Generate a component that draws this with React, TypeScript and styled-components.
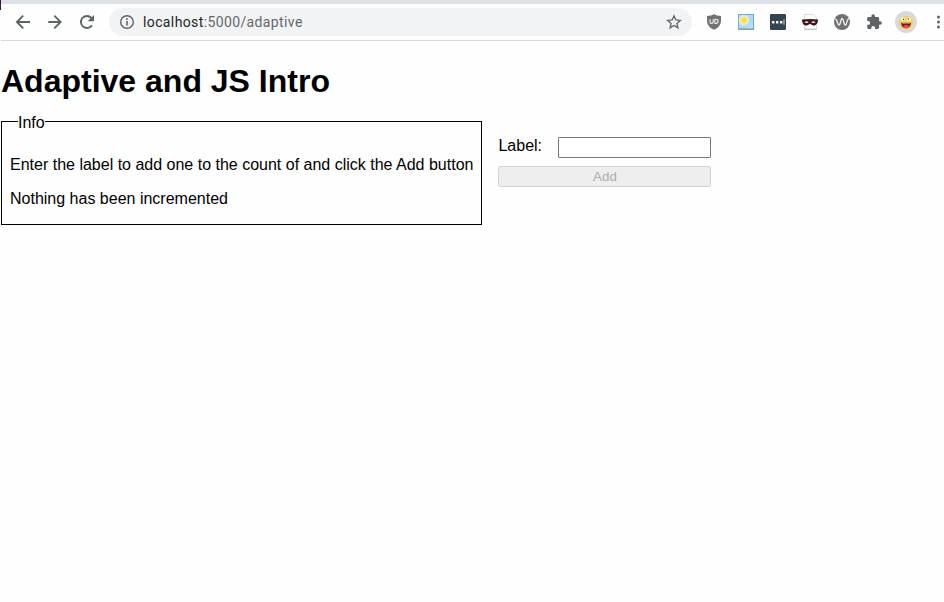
import React from "react";
import styled, { createGlobalStyle } from "styled-components";

const GlobalStyle = createGlobalStyle`
  * { box-sizing: border-box; }
  html, body { margin: 0; padding: 0; background: #fefefe; }
  body { overflow: hidden; font-family: "Liberation Sans", Arial, sans-serif; font-size: 16px; color: #000; }
`;

const Window = styled.div`
  width: 944px;
  height: 602px;
  overflow: hidden;
`;

const TabStrip = styled.div`
  height: 4px;
  background: #dee1e6;
  border-left: 1px solid #341a3a;
`;

const WindowEdge = styled.span`
  flex: none;
  width: 1px;
  height: 6px;
  align-self: flex-start;
  background: #341a3a;
`;

const Toolbar = styled.header`
  display: flex;
  align-items: center;
  height: 36px;
  background: #fefefe;
`;

const Divider = styled.div`
  height: 1px;
  margin-left: 1px;
  background: #d9dadb;
`;

const ToolButton = styled.button`
  display: flex;
  flex: none;
  align-items: center;
  justify-content: center;
  width: 32px;
  height: 32px;
  padding: 0;
  border: 0;
  background: transparent;
  svg { display: block; }
`;

const Navigation = styled.nav`
  display: flex;
  flex: none;
  margin-left: 6px;
`;

const AddressBar = styled.div`
  display: flex;
  flex: none;
  align-items: center;
  width: 583px;
  height: 28px;
  margin: 0 6px 0 6px;
  padding: 0 2px 0 10px;
  border-radius: 14px;
  background: #f1f3f4;
`;

const Url = styled.span`
  flex: 1;
  margin-left: 8px;
  font: 14px/20px Roboto, sans-serif;
  letter-spacing: 0.38px;
  color: #65686c;
`;

const Host = styled.span`
  color: #242629;
`;

const Extensions = styled.div`
  display: flex;
  flex: none;
`;

const Page = styled.main`
  padding: 22px 1px 0;
`;

const Title = styled.h1`
  margin: 0;
  font-size: 32px;
  line-height: 37px;
`;

const Columns = styled.div`
  display: flex;
  align-items: flex-start;
  gap: 16px;
  margin-top: 13px;
`;

const Info = styled.fieldset`
  width: 481px;
  height: 112px;
  margin: 0;
  padding: 0 8px;
  border: 1px solid #000;
`;

const Legend = styled.legend`
  height: 17px;
  margin-left: 8px;
  padding: 0;
  line-height: 20px;
`;

const Paragraph = styled.p`
  margin: 26px 0 0;
  line-height: 18px;
  white-space: nowrap;
  & + & { margin-top: 16px; }
`;

const Form = styled.form`
  display: grid;
  grid-template-columns: 44px 153px;
  column-gap: 16px;
  row-gap: 8px;
  margin-top: 24px;
`;

const Label = styled.label`
  line-height: 18px;
`;

const Input = styled.input`
  width: 153px;
  height: 21px;
  border: 1px solid #767676;
  border-radius: 1px;
  background: #fff;
`;

const AddButton = styled.button`
  grid-column: 1 / -1;
  height: 21px;
  padding: 0;
  border: 1px solid #d1d1d1;
  border-radius: 2.5px;
  background: #eeeeee;
  color: #acacac;
  font: 13.333px/15px "Liberation Sans", Arial, sans-serif;
`;

const ink = "#5f6368";

const BackIcon = () => (
  <svg width="32" height="32" fill="none" stroke={ink} strokeWidth="1.9">
    <path d="M23 16H10.5M16.2 9.7 9.9 16l6.3 6.3" />
  </svg>
);

const ForwardIcon = () => (
  <svg width="32" height="32" fill="none" stroke={ink} strokeWidth="1.9">
    <path d="M9.2 16h12.5M15.3 9.7l6.3 6.3-6.3 6.3" />
  </svg>
);

const ReloadIcon = () => (
  <svg width="32" height="32">
    <path d="M21 19.2A6 6 0 1 1 20.4 12l1.2 1.3" fill="none" stroke={ink} strokeWidth="1.9" />
    <path d="M23 9v6.3h-6.3z" fill={ink} />
  </svg>
);

const InfoIcon = () => (
  <svg width="16" height="16">
    <circle cx="8" cy="8" r="6.3" fill="none" stroke={ink} strokeWidth="1.4" />
    <path d="M7.2 7h1.6v4.5H7.2zM7.2 4.3h1.6v1.6H7.2z" fill={ink} />
  </svg>
);

const StarIcon = () => (
  <svg width="32" height="32">
    <path d="m16 9.8 1.8 4.2 4.5.4-3.4 3 1 4.4-3.9-2.3-3.9 2.3 1-4.4-3.4-3 4.5-.4z" fill="none" stroke={ink} strokeWidth="1.3" />
  </svg>
);

const ShieldIcon = () => (
  <svg width="32" height="32">
    <path d="M16 8c2 1.4 4.2 1.9 7 2v4.5c0 4.5-2.8 7.3-7 9.3-4.2-2-7-4.8-7-9.3V10c2.8-.1 5-.6 7-2z" fill="#727272" />
    <path d="M12 13.2v2.6q0 1.7 1.6 1.7t1.6-1.7v-2.6M16.9 13.2v4.3h.9q2.3 0 2.3-2.2t-2.3-2.1z" fill="none" stroke="#f2f2f2" strokeWidth="1.1" />
  </svg>
);

const WeatherIcon = () => (
  <svg width="32" height="32">
    <defs>
      <linearGradient id="sky" x1="0" y1="0" x2="1" y2="1">
        <stop offset="0" stopColor="#b9e2fb" />
        <stop offset=".6" stopColor="#a5d8fa" />
        <stop offset="1" stopColor="#c9e9fc" />
      </linearGradient>
      <radialGradient id="sun">
        <stop offset="0" stopColor="#ffdb45" />
        <stop offset=".48" stopColor="#fbe162" />
        <stop offset=".6" stopColor="#f4f5bf" />
        <stop offset="1" stopColor="#d9f0ee" stopOpacity="0" />
      </radialGradient>
    </defs>
    <rect x="8.5" y="8.5" width="15" height="15" fill="url(#sky)" stroke="#79a5bf" />
    <circle cx="14" cy="14.3" r="6.2" fill="url(#sun)" />
    <path d="M9 22.5h14" stroke="#9fb89f" />
  </svg>
);

const PasswordIcon = () => (
  <svg width="32" height="32">
    <rect x="8" y="8" width="16" height="16" rx="1.3" fill="#35454f" />
    <path d="M10 15h2.4v2.4H10zM14 15h2.4v2.4H14zM18 15h2.4v2.4H18zM21.6 13.3h.8v5.5h-.8z" fill="#f4f6f7" />
  </svg>
);

const MaskIcon = () => (
  <svg width="32" height="32">
    <path d="M10.5 14V8.5h9l3 3V14M10.5 19.5v3.7h12v-4" fill="#fdfdfd" stroke="#d1d1d1" strokeWidth=".8" />
    <path d="M10.5 23.3h12" stroke="#aaa" strokeWidth=".7" />
    <path d="M8 13.6q8-1.1 16 0c-.2 3.8-1.2 6-4.3 6-2 0-2.5-1.5-3.7-1.5s-1.7 1.5-3.7 1.5c-3.1 0-4.1-2.2-4.3-6z" fill="#3c1719" />
    <ellipse cx="12.5" cy="16.2" rx="1.9" ry=".9" fill="#d8cccc" />
    <ellipse cx="19.4" cy="16.2" rx="1.9" ry=".9" fill="#d8cccc" />
  </svg>
);

const WaveIcon = () => (
  <svg width="32" height="32">
    <circle cx="16" cy="16" r="8" fill="#707070" />
    <path d="M9.2 13.2c1.5-.2 1.7 1.4 2.2 3.2.8 3.2 2 3.6 2.8.8l1-3.6c.5-1.6 1.3-1.6 1.8 0l1.2 3.8c.8 2.6 1.9 2 2.5-.7.6-2.9.9-4.1 2.3-4.4" fill="none" stroke="#f5f5f5" strokeWidth="1.3" />
  </svg>
);

const PuzzleIcon = () => (
  <svg width="32" height="32">
    <path transform="translate(7.8 7.5) scale(.7)" d="M20.5 11H19V7c0-1.1-.9-2-2-2h-4V3.5a2.5 2.5 0 0 0-5 0V5H4c-1.1 0-2 .9-2 2v3.8h1.5a2.7 2.7 0 0 1 0 5.4H2V20c0 1.1.9 2 2 2h3.8v-1.5a2.7 2.7 0 0 1 5.4 0V22H17c1.1 0 2-.9 2-2v-4h1.5a2.5 2.5 0 0 0 0-5z" fill={ink} />
  </svg>
);

const AvatarIcon = () => (
  <svg width="32" height="32">
    <circle cx="16" cy="16" r="11" fill="#d9d9dc" />
    <circle cx="16" cy="16.5" r="7" fill="#f6cf5d" />
    <circle cx="13" cy="13.3" r="2" fill="#fff8e6" />
    <circle cx="18.9" cy="13.2" r="2" fill="#fff8e6" />
    <circle cx="13.6" cy="13.4" r=".7" fill="#382c25" />
    <circle cx="18.4" cy="12.9" r=".7" fill="#382c25" />
    <path d="M11.2 16.7h9.7c0 3.2-1.9 5.5-4.9 5.5s-4.8-2.3-4.8-5.5z" fill="#7c1b22" />
    <path d="M12 16.7h8v.7h-8z" fill="#eed2c3" />
    <ellipse cx="16.2" cy="20.5" rx="2.8" ry="1.5" fill="#e5544c" />
  </svg>
);

const MenuIcon = () => (
  <svg width="32" height="32" fill={ink}>
    <circle cx="16.5" cy="11" r="1.5" />
    <circle cx="16.5" cy="16" r="1.5" />
    <circle cx="16.5" cy="21" r="1.5" />
  </svg>
);

const extensions = [ShieldIcon, WeatherIcon, PasswordIcon, MaskIcon, WaveIcon, PuzzleIcon, AvatarIcon, MenuIcon];

export default function App() {
  return (
    <Window>
      <GlobalStyle />
      <TabStrip />
      <Toolbar>
        <WindowEdge />
        <Navigation>
          {[BackIcon, ForwardIcon, ReloadIcon].map((Icon, i) => (
            <ToolButton key={i}><Icon /></ToolButton>
          ))}
        </Navigation>
        <AddressBar>
          <InfoIcon />
          <Url><Host>localhost</Host>:5000/adaptive</Url>
          <ToolButton><StarIcon /></ToolButton>
        </AddressBar>
        <Extensions>
          {extensions.map((Icon, i) => <ToolButton key={i}><Icon /></ToolButton>)}
        </Extensions>
      </Toolbar>
      <Divider />
      <Page>
        <Title>Adaptive and JS Intro</Title>
        <Columns>
          <Info>
            <Legend>Info</Legend>
            <Paragraph>Enter the label to add one to the count of and click the Add button</Paragraph>
            <Paragraph>Nothing has been incremented</Paragraph>
          </Info>
          <Form>
            <Label htmlFor="label">Label:</Label>
            <Input id="label" />
            <AddButton type="button" disabled>Add</AddButton>
          </Form>
        </Columns>
      </Page>
    </Window>
  );
}
